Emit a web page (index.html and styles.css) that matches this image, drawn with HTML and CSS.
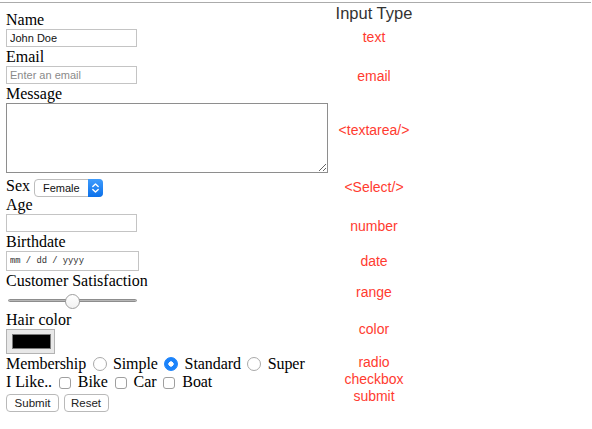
FILE: index.html
```html
<!DOCTYPE html>
<html lang="en">
<head>
<meta charset="utf-8">
<title>Input Types</title>
<link rel="stylesheet" href="styles.css">
</head>
<body>
<div class="topline"></div>
<div class="page">
  <form class="form">
    <label class="lbl">Name</label>
    <input class="field" type="text" value="John Doe">
    <label class="lbl">Email</label>
    <input class="field" type="email" placeholder="Enter an email">
    <label class="lbl">Message</label>
    <textarea class="message"></textarea>
    <div class="sex-row">
      <span class="lbl-inline">Sex</span>
      <span class="select">
        <select class="select-native"><option>Female</option><option>Male</option></select>
        <span class="select-arrow">
          <svg width="15" height="18" viewBox="0 0 15 18" aria-hidden="true">
            <polyline points="4.8,7.6 7.5,4.9 10.2,7.6" fill="none" stroke="#fff" stroke-width="1.4" stroke-linecap="round" stroke-linejoin="round"/>
            <polyline points="4.8,10.4 7.5,13.1 10.2,10.4" fill="none" stroke="#fff" stroke-width="1.4" stroke-linecap="round" stroke-linejoin="round"/>
          </svg>
        </span>
      </span>
    </div>
    <label class="lbl">Age</label>
    <input class="field number" type="number">
    <label class="lbl">Birthdate</label>
    <input class="field date" type="text" placeholder="mm / dd / yyyy">
    <label class="lbl">Customer Satisfaction</label>
    <input class="range" type="range" min="0" max="100" value="50">
    <label class="lbl">Hair color</label>
    <input class="color" type="color" value="#000000">
    <div class="choice-row">Membership <input class="radio" type="radio" name="m"> Simple <input class="radio" type="radio" name="m" checked> Standard <input class="radio" type="radio" name="m"> Super</div>
    <div class="choice-row likes">I Like.. <input class="check" type="checkbox"> Bike <input class="check" type="checkbox"> Car <input class="check" type="checkbox"> Boat</div>
    <div class="buttons">
      <button class="btn btn-submit" type="submit">Submit</button>
      <button class="btn btn-reset" type="reset">Reset</button>
    </div>
  </form>
  <div class="types">
    <div class="types-title">Input Type</div>
    <div class="type t-text">text</div>
    <div class="type t-email">email</div>
    <div class="type t-textarea">&lt;textarea/&gt;</div>
    <div class="type t-select">&lt;Select/&gt;</div>
    <div class="type t-number">number</div>
    <div class="type t-date">date</div>
    <div class="type t-range">range</div>
    <div class="type t-color">color</div>
    <div class="type t-radio">radio</div>
    <div class="type t-checkbox">checkbox</div>
    <div class="type t-submit">submit</div>
  </div>
</div>
</body>
</html>
```
FILE: styles.css
```css
html, body {
  margin: 0;
  background: #fff;
}
body {
  padding-top: 2px;
  font-family: "Liberation Serif", "Times New Roman", serif;
  font-size: 16px;
  color: #000;
}
.topline {
  width: 591px;
  height: 1px;
  background: #ababab;
}
.page {
  display: flex;
  padding-left: 6px;
}
.form {
  width: 329px;
  padding-top: 7px;
  display: flex;
  flex-direction: column;
  align-items: flex-start;
  margin: 0;
}
.lbl {
  display: block;
  height: 19px;
  line-height: 20px;
  white-space: nowrap;
}
.field {
  box-sizing: border-box;
  width: 131px;
  height: 18px;
  margin: 0;
  padding: 0 3px;
  border: 1px solid #c4c4c4;
  border-radius: 0;
  background: #fff;
  font: 11px "Liberation Sans", Arial, sans-serif;
  color: #111;
  outline: none;
}
.field::placeholder {
  color: #8a8a8a;
}
.number {
  -moz-appearance: textfield;
  appearance: textfield;
}
.number::-webkit-inner-spin-button,
.number::-webkit-outer-spin-button {
  -webkit-appearance: none;
  margin: 0;
}
.date {
  width: 133px;
  height: 20px;
  padding-left: 3px;
  font: 8.8px "Liberation Mono", "Courier New", monospace;
}
.date::placeholder {
  color: #2e2e2e;
}
.message {
  box-sizing: border-box;
  display: block;
  width: 322px;
  height: 70px;
  margin: 0;
  padding: 2px;
  border: 1px solid #8e8e8e;
  border-radius: 0;
  font: 12px "Liberation Mono", monospace;
  outline: none;
}
.sex-row {
  box-sizing: border-box;
  display: flex;
  align-items: flex-start;
  gap: 4px;
  height: 22px;
  padding-top: 3px;
}
.lbl-inline {
  line-height: 20px;
}
.select {
  box-sizing: border-box;
  display: inline-flex;
  width: 69px;
  height: 18px;
  margin-top: 3px;
  border: 1px solid #bdbdbd;
  border-radius: 4px;
  background: #fff;
}
.select-native {
  -webkit-appearance: none;
  appearance: none;
  flex: 1;
  min-width: 0;
  height: 16px;
  margin: 0;
  padding: 0 0 0 8px;
  border: 0;
  background: transparent;
  font: 11px "Liberation Sans", Arial, sans-serif;
  color: #111;
  outline: none;
}
.select-arrow {
  display: flex;
  width: 15px;
  height: 18px;
  margin: -1px -1px -1px 0;
  border-radius: 0 4px 4px 0;
  background: linear-gradient(#3f9cfd, #0b70ea);
}
.range {
  -webkit-appearance: none;
  appearance: none;
  display: block;
  width: 129px;
  height: 20px;
  margin: 0 0 0 2px;
  padding: 0;
  background: transparent;
}
.range::-webkit-slider-runnable-track {
  height: 3px;
  border: 1px solid #8d8d8d;
  border-radius: 3px;
  background: linear-gradient(#a6a6a6, #c8c8c8);
}
.range::-webkit-slider-thumb {
  -webkit-appearance: none;
  box-sizing: border-box;
  width: 15px;
  height: 15px;
  margin-top: -6px;
  border: 1px solid #9e9e9e;
  border-radius: 50%;
  background: linear-gradient(#ffffff, #f2f2f2);
}
.color {
  -webkit-appearance: none;
  appearance: none;
  box-sizing: border-box;
  display: block;
  width: 49px;
  height: 25px;
  margin: 0;
  padding: 0;
  border: 1px solid #b3b3b3;
  border-radius: 0;
  background: #e8e8e8;
}
.color::-webkit-color-swatch-wrapper {
  padding: 4px 3px 4px 5px;
}
.color::-webkit-color-swatch {
  border: 1px solid #7a7a7a;
  border-radius: 0;
}
.choice-row {
  height: 18px;
  line-height: 20px;
  white-space: nowrap;
  letter-spacing: -0.08px;
}
.likes {
  height: 19px;
}
.radio {
  -webkit-appearance: none;
  appearance: none;
  box-sizing: border-box;
  display: inline-block;
  width: 14px;
  height: 14px;
  margin: 0 2.5px;
  border: 1px solid #a9a9a9;
  border-radius: 50%;
  background: #fff;
  vertical-align: -2px;
}
.radio:checked {
  border-color: #1b83fb;
  background: radial-gradient(circle, #fff 0 2.4px, #1b83fb 2.9px);
}
.check {
  -webkit-appearance: none;
  appearance: none;
  box-sizing: border-box;
  display: inline-block;
  width: 12px;
  height: 12px;
  margin: 0 3px;
  border: 1px solid #9f9f9f;
  border-radius: 3px;
  background: #fff;
  vertical-align: -2px;
}
.buttons {
  display: flex;
  gap: 4.5px;
  margin-top: 3px;
}
.btn {
  box-sizing: border-box;
  height: 18px;
  margin: 0;
  padding: 0;
  border: 1px solid #b9b9b9;
  border-radius: 4px;
  background: #fff;
  font: 11.5px "Liberation Sans", Arial, sans-serif;
  color: #222;
}
.btn-submit {
  width: 53px;
}
.btn-reset {
  width: 45px;
}
.types {
  width: 78px;
  padding-top: 1px;
  display: flex;
  flex-direction: column;
  align-items: center;
  font-family: "Liberation Sans", Arial, sans-serif;
  white-space: nowrap;
}
.types-title {
  font-size: 16.5px;
  line-height: 18px;
  color: #333;
}
.type {
  font-size: 14px;
  line-height: 16px;
  color: #ff3b30;
}
.t-text { margin-top: 6.5px; }
.t-email { margin-top: 23px; }
.t-textarea { margin-top: 38px; }
.t-select { margin-top: 41px; }
.t-number { margin-top: 23.5px; }
.t-date { margin-top: 18.5px; }
.t-range { margin-top: 15px; }
.t-color { margin-top: 21px; }
.t-radio { margin-top: 17.5px; }
.t-checkbox { margin-top: 1.3px; }
.t-submit { margin-top: 0.7px; }
```
